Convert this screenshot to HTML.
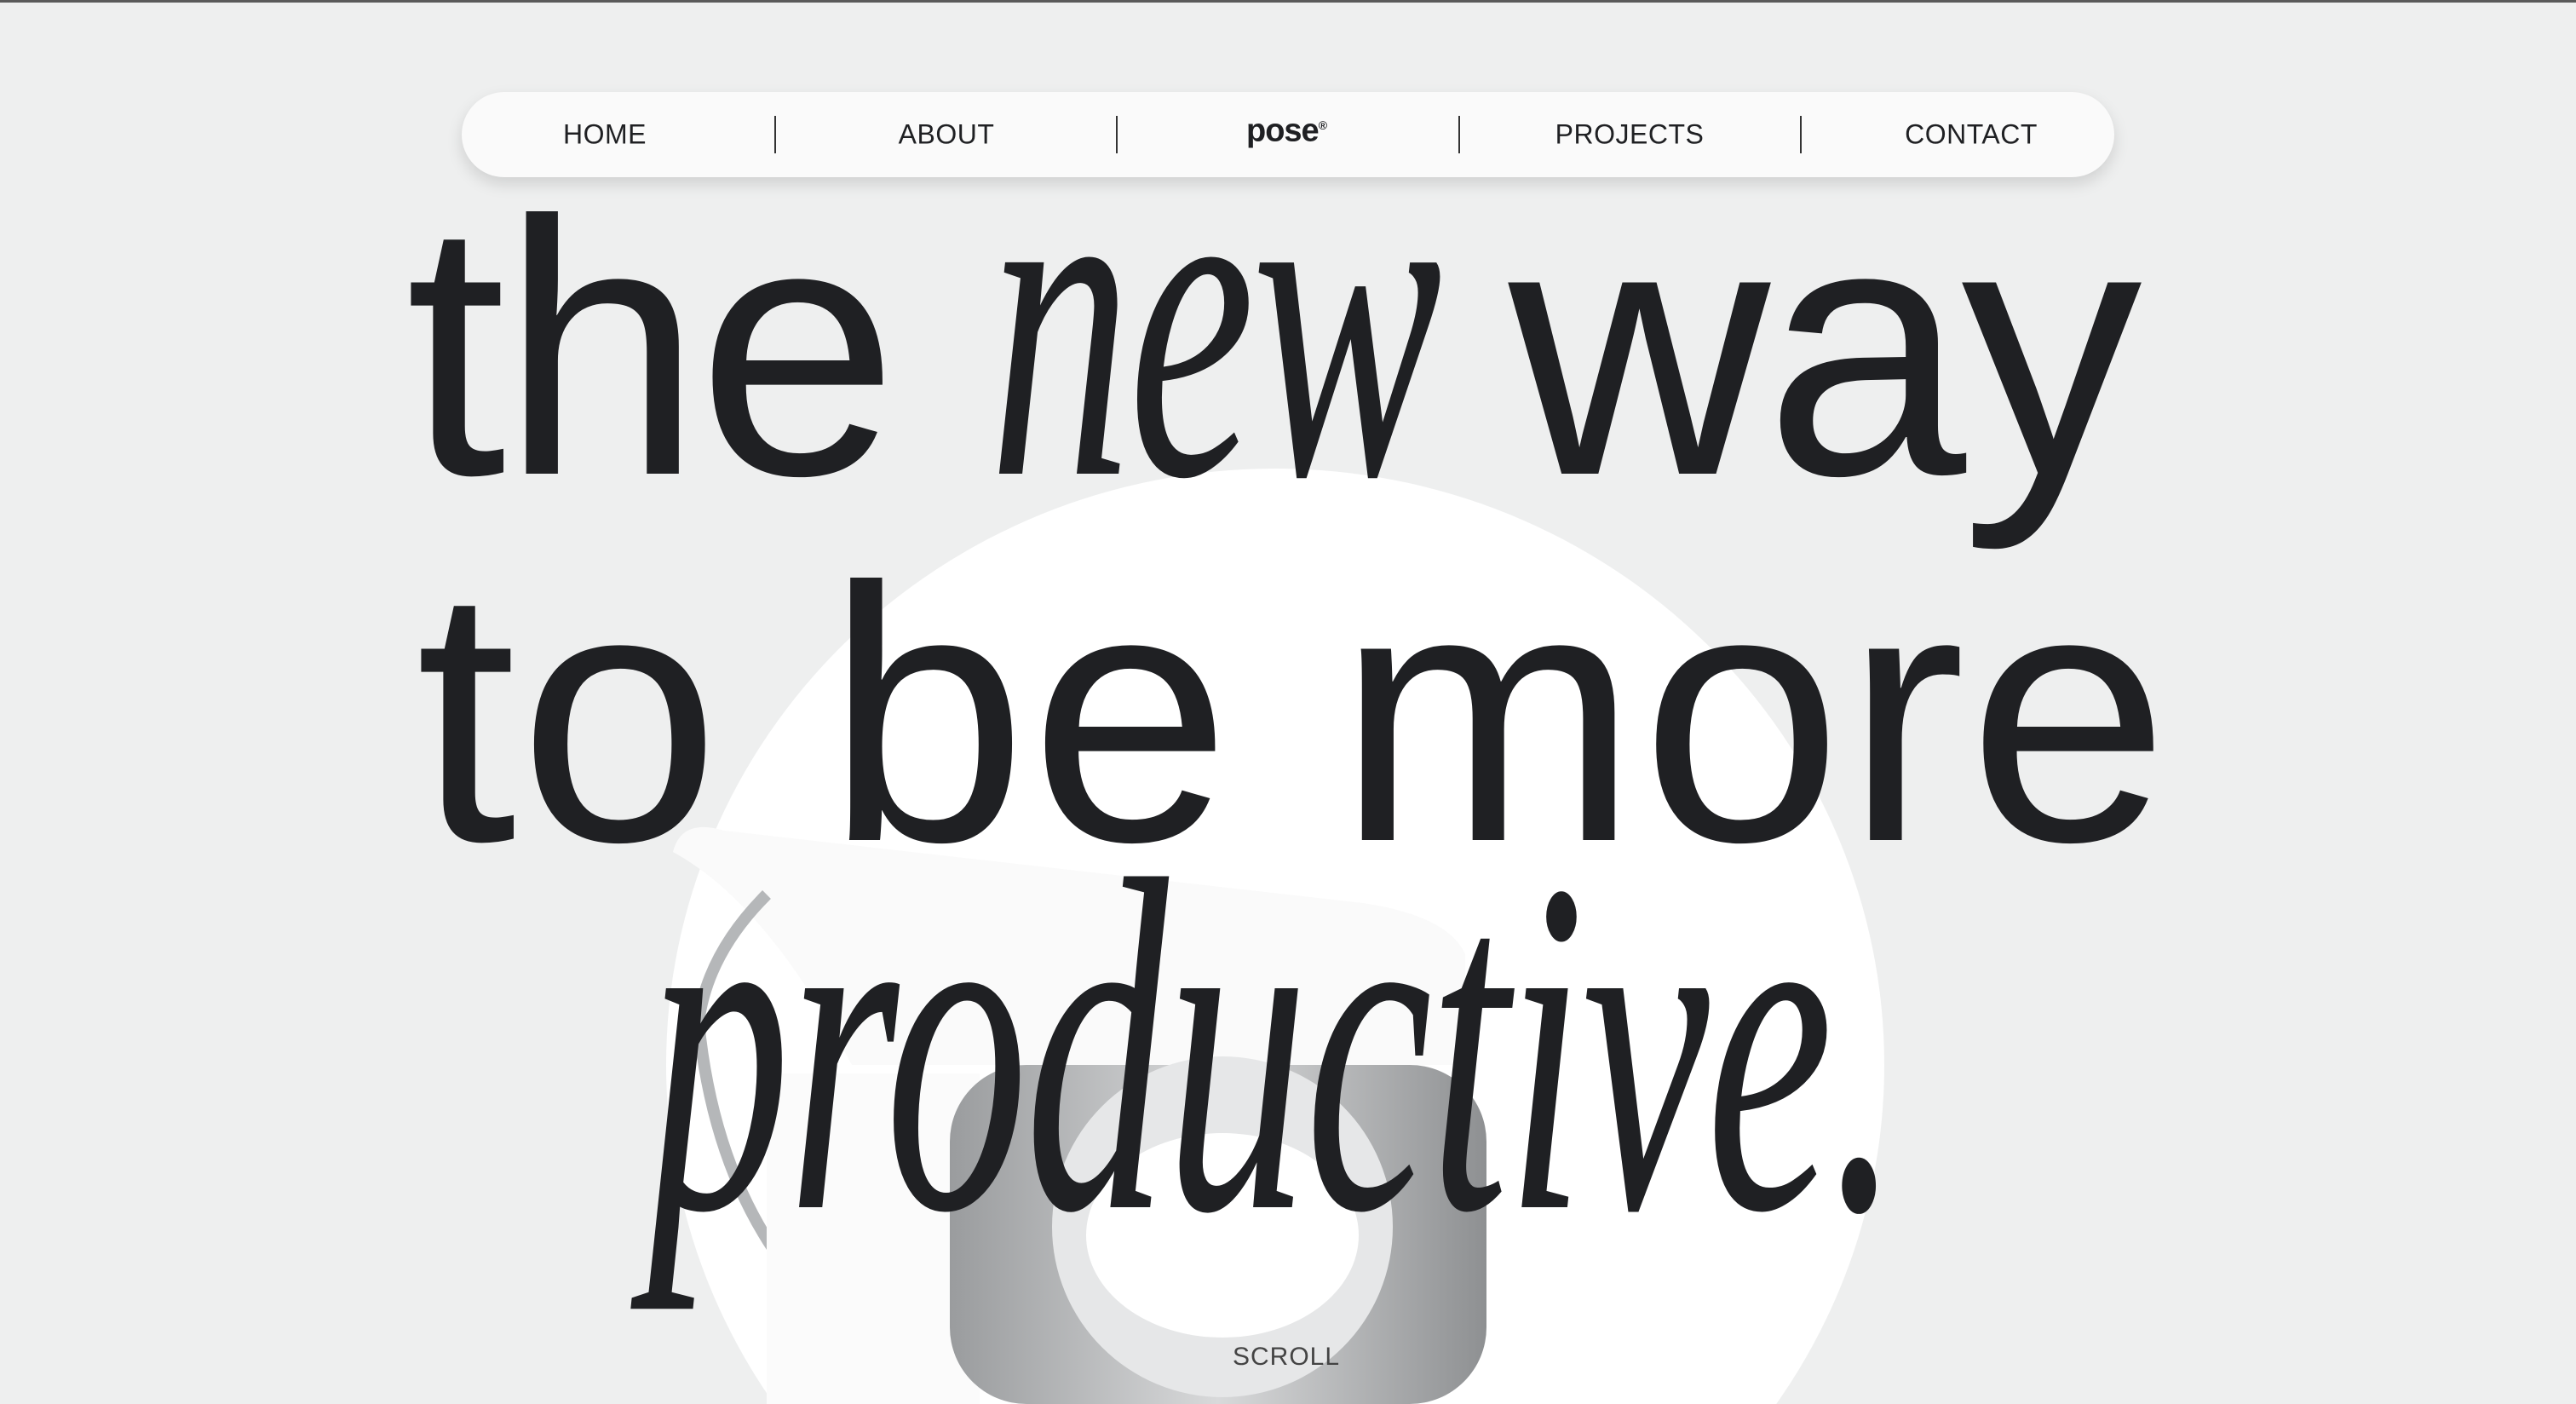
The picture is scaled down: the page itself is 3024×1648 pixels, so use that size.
<!DOCTYPE html>
<html><head><meta charset="utf-8"><style>
html,body{margin:0;padding:0;width:3024px;height:1648px;overflow:hidden}
body{position:relative;background:#eeefef;font-family:"Liberation Sans",sans-serif;color:#1f2023}
.clip{position:absolute;left:0;top:0;width:3024px;height:1648px;overflow:hidden}
.topline{position:absolute;left:0;top:0;width:3024px;height:3px;background:#5a5a5a}
.blob{position:absolute;left:782px;top:550px;width:1430px;height:1400px;border-radius:50%;background:#fff}
.nav{position:absolute;left:542px;top:108px;width:1940px;height:100px;border-radius:50px;background:#fafafa;box-shadow:0 8px 18px rgba(0,0,0,.13)}
.nav span{position:absolute;top:50px;transform:translate(-50%,-50%);font-size:32px;letter-spacing:0.5px}
.div{position:absolute;top:28px;width:2px;height:44px;background:#333}
.h{position:absolute;font-size:425px;line-height:1;white-space:nowrap;letter-spacing:-6px}
.it{font-family:"Liberation Serif",serif;font-style:italic;display:inline-block;transform-origin:left bottom}
.scroll{position:absolute;left:1510px;top:1593px;transform:translate(-50%,-50%);font-size:30px;color:#444;letter-spacing:1px}
</style></head><body>
<div class="clip">
<div class="topline"></div>
<div class="blob"></div>
<svg style="position:absolute;left:0;top:0" width="3024" height="1648">
  <defs>
    <linearGradient id="g" x1="0" x2="1"><stop offset="0" stop-color="#9a9c9e"/><stop offset=".5" stop-color="#d8d9da"/><stop offset="1" stop-color="#8e9092"/></linearGradient>
  </defs>
  <path d="M790 1000 Q800 960 850 975 L1600 1060 Q1700 1075 1720 1120 L1720 1250 L1000 1250 Q900 1060 790 1000Z" fill="#fafafa"/>
  <path d="M900 1050 Q830 1120 820 1200 Q840 1400 950 1520" stroke="#b5b7b9" stroke-width="14" fill="none"/>
  <rect x="900" y="1260" width="250" height="388" fill="#fbfbfb"/>
  <rect x="1115" y="1250" width="630" height="398" rx="90" fill="url(#g)"/>
  <ellipse cx="1435" cy="1440" rx="200" ry="200" fill="#e6e7e8"/>
  <ellipse cx="1435" cy="1450" rx="160" ry="120" fill="#fff"/>
</svg>
<div class="nav">
  <span style="left:168px">HOME</span>
  <div class="div" style="left:367px"></div>
  <span style="left:569px">ABOUT</span>
  <div class="div" style="left:768px"></div>
  <span style="left:968px;font-weight:bold;font-size:38px;letter-spacing:-1px;top:46px">pose<sup style="font-size:14px">®</sup></span>
  <div class="div" style="left:1170px"></div>
  <span style="left:1371px">PROJECTS</span>
  <div class="div" style="left:1571px"></div>
  <span style="left:1772px">CONTACT</span>
</div>
<div class="h" style="left:476px;top:104px">the <span class="it" style="font-size:540px;transform:scaleX(0.62);width:610px">new</span>way</div>
<div class="h" style="left:488px;top:627px;letter-spacing:3px">to be more</div>
<div class="h" style="left:760px;top:949px"><span class="it" style="font-size:560px;transform:scaleX(0.6)">productive.</span></div>
<div class="scroll">SCROLL</div>
</div>
</body></html>
